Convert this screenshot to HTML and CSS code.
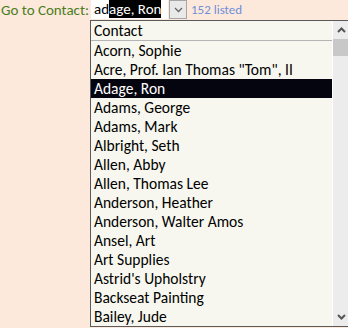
FILE: index.html
```html
<!DOCTYPE html>
<html lang="en">
<head>
    <meta charset="UTF-8">
    <title>Go to Contact</title>
    <link rel="stylesheet" href="styles.css">
</head>
<body>
    <div class="toolbar">
        <span class="label">Go to Contact:</span>
        <div class="combo">
            <div class="combo-input">ad<span class="sel">age, Ron</span></div>
            <div class="combo-btn">
                <svg width="9" height="6" viewBox="0 0 9 6"><path d="M1 1 L4.5 4.5 L8 1" fill="none" stroke="#666" stroke-width="1.3"/></svg>
            </div>
            <div class="dropdown">
                <div class="rows">
                    <div class="row head">Contact</div>
                    <div class="row">Acorn, Sophie</div>
                    <div class="row">Acre, Prof. Ian Thomas "Tom", II</div>
                    <div class="row active">Adage, Ron</div>
                    <div class="row">Adams, George</div>
                    <div class="row">Adams, Mark</div>
                    <div class="row">Albright, Seth</div>
                    <div class="row">Allen, Abby</div>
                    <div class="row">Allen, Thomas Lee</div>
                    <div class="row">Anderson, Heather</div>
                    <div class="row">Anderson, Walter Amos</div>
                    <div class="row">Ansel, Art</div>
                    <div class="row">Art Supplies</div>
                    <div class="row">Astrid's Upholstry</div>
                    <div class="row">Backseat Painting</div>
                    <div class="row">Bailey, Jude</div>
                </div>
                <div class="scrollbar">
                    <div class="arrow">
                        <svg width="9" height="6" viewBox="0 0 9 6"><path d="M1 5 L4.5 1.5 L8 5" fill="none" stroke="#555" stroke-width="2"/></svg>
                    </div>
                    <div class="thumb"></div>
                    <div class="track"></div>
                    <div class="arrow">
                        <svg width="9" height="6" viewBox="0 0 9 6"><path d="M1 1 L4.5 4.5 L8 1" fill="none" stroke="#555" stroke-width="2"/></svg>
                    </div>
                </div>
            </div>
        </div>
        <span class="count">152 listed</span>
    </div>
</body>
</html>
```
FILE: styles.css
```css
body {
    margin: 0;
    height: 328px;
    overflow: hidden;
    background-color: #fde9dc;
    font-family: Carlito, "Liberation Sans", sans-serif;
}
.toolbar {
    display: flex;
    align-items: flex-start;
    height: 20px;
}
.label {
    color: #4a7d1c;
    font-size: 15px;
    line-height: 20px;
    padding-left: 1px;
    width: 90px;
}
.combo {
    position: relative;
    display: flex;
}
.combo-input {
    width: 74px;
    height: 19px;
    background-color: #fff;
    padding-left: 3px;
    font-size: 15px;
    line-height: 19px;
    color: #000;
    white-space: nowrap;
}
.sel {
    background-color: #000;
    color: #fff;
}
.combo-btn {
    width: 16px;
    height: 17px;
    margin-left: 1px;
    background-color: #e9e9e9;
    border: 1px solid #a6a6a6;
    display: flex;
    align-items: center;
    justify-content: center;
}
.count {
    color: #6f8fd8;
    font-size: 13px;
    line-height: 20px;
    margin-left: 4px;
}
.dropdown {
    position: absolute;
    top: 20px;
    left: -1px;
    width: 270px;
    height: 305px;
    display: flex;
    background-color: #f7f7ef;
    border: 1px solid #5a5a5a;
}
.rows {
    width: 241px;
}
.row {
    height: 19px;
    line-height: 19px;
    padding-left: 3px;
    font-size: 15.5px;
    color: #000;
    white-space: pre;
    overflow: hidden;
}
.row.head {
    border-bottom: 1px solid #b4b4b4;
}
.row.active {
    background-color: #05050f;
    color: #fff;
}
.scrollbar {
    width: 16px;
    display: flex;
    flex-direction: column;
    background-color: #ececec;
    border-left: 1px solid #fff;
}
.arrow {
    height: 18px;
    display: flex;
    align-items: center;
    justify-content: center;
}
.thumb {
    height: 17px;
    background-color: #c8c8c8;
}
.track {
    flex: 1;
}
```
